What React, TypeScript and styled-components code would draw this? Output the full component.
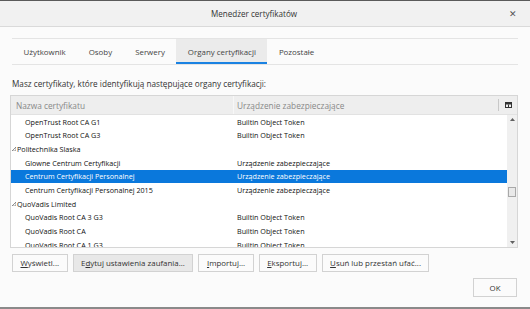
import React from 'react';
import styled, { createGlobalStyle } from 'styled-components';

const GlobalStyle = createGlobalStyle`
    html, body {
        margin: 0;
        padding: 0;
        background: #fbfbfb;
    }
    body {
        font-family: "Open Sans", "Noto Sans", sans-serif;
        color: #222;
    }
`;

const Window = styled.div`
    width: 530px;
    height: 309px;
    box-sizing: border-box;
    display: flex;
    flex-direction: column;
    background: #fbfbfb;
    border-top: 1px solid #5a5a5a;
    border-bottom: 2px solid #8a8a8a;
`;

const TitleBar = styled.div`
    height: 25px;
    flex-shrink: 0;
    display: grid;
    grid-template-columns: 1fr auto 1fr;
    align-items: center;
    background: #f1f1f1;
    border-bottom: 1px solid #dadada;
`;

const Title = styled.span`
    grid-column: 2;
    margin-right: 22px;
    font-size: 8.1px;
    color: #333;
`;

const CloseButton = styled.span`
    grid-column: 3;
    justify-self: end;
    margin-right: 13px;
    font-size: 9px;
    color: #555;
`;

const Body = styled.div`
    flex: 1;
    display: flex;
    flex-direction: column;
    padding: 11px 12px 0;
`;

const Tabs = styled.div`
    display: flex;
    height: 25px;
    border-top: 1px solid #e4e4e4;
    border-bottom: 1px solid #e4e4e4;
`;

const Tab = styled.div<{ $active?: boolean }>`
    display: flex;
    align-items: center;
    padding: 2px 11.5px 0;
    font-size: 7.9px;
    color: #444;
    box-sizing: border-box;
    background: ${p => (p.$active ? '#ebebeb' : 'transparent')};
    border-bottom: 2px solid ${p => (p.$active ? '#1a82e2' : 'transparent')};
`;

const Intro = styled.div`
    margin: 13px 0 5px;
    font-size: 8.2px;
    color: #333;
    line-height: 12px;
`;

const Tree = styled.div`
    margin-left: -2px;
    height: 153px;
    box-sizing: border-box;
    border: 1px solid #d6d6d6;
    background: #fff;
    display: flex;
    flex-direction: column;
`;

const HeaderRow = styled.div`
    height: 18px;
    flex-shrink: 0;
    display: grid;
    grid-template-columns: 222px 1fr 19px;
    align-items: center;
    background: #eeeeee;
    border-bottom: 1px solid #e2e2e2;
`;

const HeaderCell = styled.div<{ $divider?: boolean }>`
    font-size: 8.3px;
    color: #888;
    padding-left: ${p => (p.$divider ? '3px' : '5px')};
    height: 100%;
    display: flex;
    align-items: center;
    box-sizing: border-box;
    border-left: ${p => (p.$divider ? '1px solid #f7f7f7' : 'none')};
`;

const PickerCell = styled.div`
    height: 12px;
    display: flex;
    align-items: center;
    justify-content: center;
    border-left: 1px solid #c8c8c8;
`;

const Content = styled.div`
    flex: 1;
    display: flex;
    min-height: 0;
`;

const Rows = styled.div`
    flex: 1;
    overflow: hidden;
`;

const Row = styled.div<{ $selected?: boolean }>`
    height: 13.67px;
    display: grid;
    grid-template-columns: 222px 1fr;
    align-items: center;
    font-size: 7.2px;
    background: ${p => (p.$selected ? '#0a78dc' : 'transparent')};
    color: ${p => (p.$selected ? '#fff' : '#111')};
`;

const NameCell = styled.div<{ $group?: boolean }>`
    padding-left: ${p => (p.$group ? '1px' : '14px')};
    display: flex;
    align-items: center;
    gap: 1px;
    white-space: nowrap;
`;

const DeviceCell = styled.div`
    padding-left: 4px;
    white-space: nowrap;
`;

const Scrollbar = styled.div`
    width: 10px;
    flex-shrink: 0;
    background: #f0f0f0;
    display: flex;
    flex-direction: column;
    align-items: center;
    padding: 3px 0 3px;
    box-sizing: border-box;
`;

const Thumb = styled.div`
    width: 8px;
    height: 10px;
    margin-top: 66px;
    box-sizing: border-box;
    background: #e9e9e9;
    border: 1px solid #a9a9a9;
`;

const Spacer = styled.div`
    flex: 1;
`;

const ButtonRow = styled.div`
    display: flex;
    gap: 5px;
    margin-top: 6px;
`;

const Button = styled.div<{ $focused?: boolean }>`
    height: 18px;
    box-sizing: border-box;
    padding: 0 7.5px;
    display: flex;
    align-items: center;
    font-size: 7.9px;
    line-height: 10px;
    color: #333;
    white-space: nowrap;
    border: 1px solid #d2d2d2;
    background: ${p => (p.$focused ? '#e8e8e8' : '#fbfbfb')};
`;

const Key = styled.span`
    text-decoration: underline;
`;

const Footer = styled.div`
    display: flex;
    justify-content: flex-end;
    margin-top: 6px;
    margin-right: 1px;
`;

const OkButton = styled(Button)`
    width: 44px;
    height: 19px;
    justify-content: center;
`;

const GroupArrow = () => (
    <svg width="4" height="4" viewBox="0 0 4 4">
        <path d="M4 0 L4 4 L0 4 Z" fill="none" stroke="#777" strokeWidth="0.8" />
    </svg>
);

const PickerIcon = () => (
    <svg width="7" height="6" viewBox="0 0 7 6">
        <rect x="0.5" y="0.5" width="6" height="5" fill="none" stroke="#333" />
        <rect x="0.5" y="0.5" width="6" height="2" fill="#333" />
        <rect x="3" y="2.5" width="1" height="3" fill="#333" />
    </svg>
);

const ScrollArrow = ({ up }: { up?: boolean }) => (
    <svg width="5" height="3" viewBox="0 0 5 3">
        <path d={up ? 'M0 3 L2.5 0 L5 3 Z' : 'M0 0 L2.5 3 L5 0 Z'} fill="#606060" />
    </svg>
);

type Item = { name: string; device?: string; group?: boolean; selected?: boolean };

const items: Item[] = [
    { name: 'OpenTrust Root CA G1', device: 'Builtin Object Token' },
    { name: 'OpenTrust Root CA G3', device: 'Builtin Object Token' },
    { name: 'Politechnika Slaska', group: true },
    { name: 'Glowne Centrum Certyfikacji', device: 'Urządzenie zabezpieczające' },
    { name: 'Centrum Certyfikacji Personalnej', device: 'Urządzenie zabezpieczające', selected: true },
    { name: 'Centrum Certyfikacji Personalnej 2015', device: 'Urządzenie zabezpieczające' },
    { name: 'QuoVadis Limited', group: true },
    { name: 'QuoVadis Root CA 3 G3', device: 'Builtin Object Token' },
    { name: 'QuoVadis Root CA', device: 'Builtin Object Token' },
    { name: 'QuoVadis Root CA 1 G3', device: 'Builtin Object Token' },
];

const tabs = ['Użytkownik', 'Osoby', 'Serwery', 'Organy certyfikacji', 'Pozostałe'];

const App = () => (
    <>
        <GlobalStyle />
        <Window>
            <TitleBar>
                <Title>Menedżer certyfikatów</Title>
                <CloseButton>✕</CloseButton>
            </TitleBar>
            <Body>
                <Tabs>
                    {tabs.map(t => (
                        <Tab key={t} $active={t === 'Organy certyfikacji'}>{t}</Tab>
                    ))}
                </Tabs>
                <Intro>Masz certyfikaty, które identyfikują następujące organy certyfikacji:</Intro>
                <Tree>
                    <HeaderRow>
                        <HeaderCell>Nazwa certyfikatu</HeaderCell>
                        <HeaderCell $divider>Urządzenie zabezpieczające</HeaderCell>
                        <PickerCell><PickerIcon /></PickerCell>
                    </HeaderRow>
                    <Content>
                        <Rows>
                            {items.map(item => (
                                <Row key={item.name} $selected={item.selected}>
                                    <NameCell $group={item.group}>
                                        {item.group && <GroupArrow />}
                                        {item.name}
                                    </NameCell>
                                    <DeviceCell>{item.device}</DeviceCell>
                                </Row>
                            ))}
                        </Rows>
                        <Scrollbar>
                            <ScrollArrow up />
                            <Thumb />
                            <Spacer />
                            <ScrollArrow />
                        </Scrollbar>
                    </Content>
                </Tree>
                <ButtonRow>
                    <Button><Key>W</Key>yświetl...</Button>
                    <Button $focused>E<Key>d</Key>ytuj ustawienia zaufania...</Button>
                    <Button><Key>I</Key>mportuj...</Button>
                    <Button><Key>E</Key>ksportuj...</Button>
                    <Button><Key>U</Key>suń lub przestań ufać...</Button>
                </ButtonRow>
                <Footer>
                    <OkButton>OK</OkButton>
                </Footer>
            </Body>
        </Window>
    </>
);

export default App;
